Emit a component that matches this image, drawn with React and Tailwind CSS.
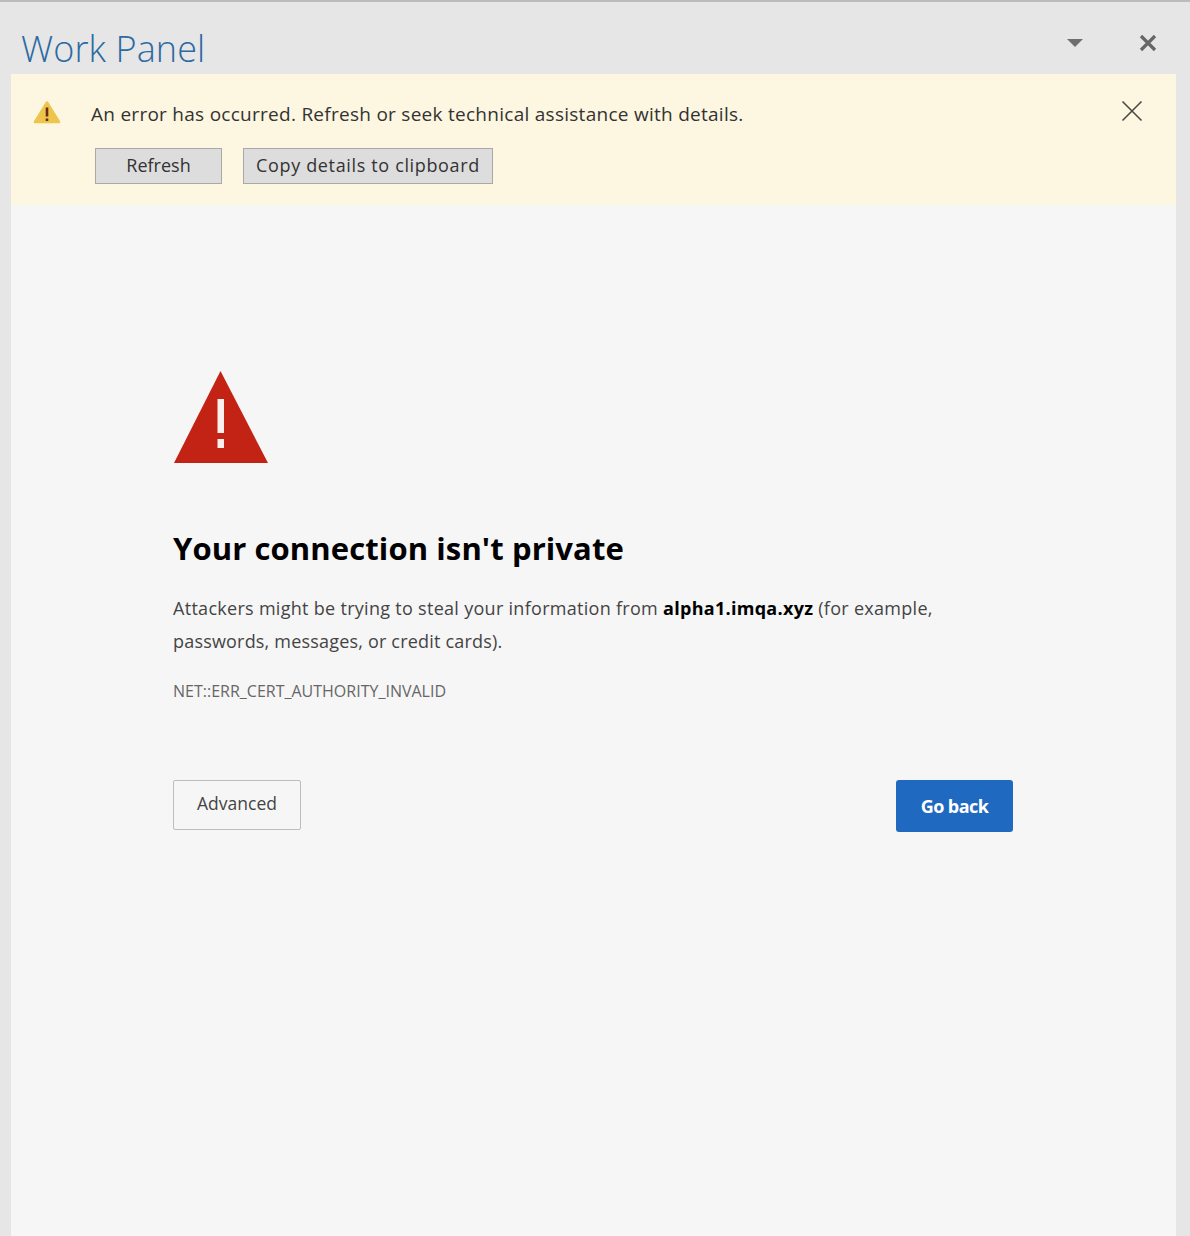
export default function App() {
  return (
    <div className="h-[1236px] w-[1190px] overflow-hidden bg-[#e6e6e6] border-t-2 border-[#bcbcbc] font-['Open_Sans','Noto_Sans',sans-serif] flex flex-col">
      <header className="h-[72px] shrink-0 flex items-start pl-[21px] pr-[32px]">
        <h1 className="mt-[25px] text-[36px] leading-[44px] font-light text-[#2b6aa3] tracking-[0.1px]">Work Panel</h1>
        <div className="ml-auto mt-[31px] flex items-center gap-[54px]">
          <svg width="18" height="10" viewBox="0 0 18 10"><path d="M1 1h16l-8 8z" fill="#6e6e6e" /></svg>
          <svg width="20" height="20" viewBox="0 0 20 20"><path d="M3 3l14 14M17 3L3 17" stroke="#666" strokeWidth="3.2" /></svg>
        </div>
      </header>
      <main className="ml-[11px] w-[1165px] flex-1 bg-[#f6f6f6] flex flex-col">
        <section className="h-[131px] bg-[#fdf6e0] relative pl-[22px] pt-[25px]">
          <div className="flex items-center">
            <svg width="28" height="25" viewBox="0 0 28 25" className="-mt-[4px]">
              <path d="M14 2.5L26 22H2z" fill="#ecc54a" stroke="#ecc54a" strokeWidth="2.5" strokeLinejoin="round" />
              <path d="M12.7 7.5h2.6v9h-2.6zM12.7 18.5h2.6v2.5h-2.6z" fill="#6b2a14" />
            </svg>
            <p className="ml-[30px] text-[19px] leading-[30px] text-[#333] tracking-[0.27px] whitespace-nowrap">An error has occurred. Refresh or seek technical assistance with details.</p>
          </div>
          <div className="mt-[19px] ml-[62px] flex gap-[21px]">
            <button className="h-[36px] w-[127px] bg-[#dddddd] border border-[#a9a9a9] text-[18px] text-[#333] pb-[2px] leading-none">Refresh</button>
            <button className="h-[36px] w-[250px] bg-[#dddddd] border border-[#a9a9a9] text-[18px] text-[#333] tracking-[0.65px] pb-[2px] leading-none">Copy details to clipboard</button>
          </div>
          <button className="absolute right-[33px] top-[26px]" aria-label="Dismiss">
            <svg width="22" height="22" viewBox="0 0 22 22" className="block"><path d="M1.5 1.5l19 19M20.5 1.5l-19 19" stroke="#4a4a44" strokeWidth="1.6" /></svg>
          </button>
        </section>
        <section className="pl-[162px] pt-[165px] w-[1002px]">
          <svg width="96" height="94" viewBox="0 0 96 94" className="block">
            <path d="M47.5 1L95 93H1z" fill="#c32314" />
            <path d="M44.5 29h6.5v34h-6.5zM44.5 69h6.5v9h-6.5z" fill="#fbeeee" />
          </svg>
          <h2 className="mt-[62px] text-[31px] leading-[44px] font-bold text-black tracking-[0.1px] whitespace-nowrap">Your connection isn't private</h2>
          <p className="mt-[22px] w-[790px] text-[18px] leading-[33px] text-[#444] tracking-[0.29px]">
            Attackers might be trying to steal your information from <b className="font-bold text-black">alpha1.imqa.xyz</b> (for example, <span className="tracking-[0.19px]">passwords, messages, or credit cards).</span>
          </p>
          <p className="mt-[23px] text-[16px] leading-[20px] text-[#666]">NET::ERR_CERT_AUTHORITY_INVALID</p>
          <div className="mt-[79px] flex items-start justify-between w-[840px]">
            <button className="h-[50px] w-[128px] bg-[#f6f6f6] border border-[#bdbdbd] rounded-[2px] text-[17.5px] text-[#444] pb-[2px] leading-none">Advanced</button>
            <button className="h-[52px] w-[117px] bg-[#1f69c1] rounded-[3px] text-[18px] font-bold text-white tracking-[-0.55px] leading-none">Go back</button>
          </div>
        </section>
      </main>
    </div>
  );
}
